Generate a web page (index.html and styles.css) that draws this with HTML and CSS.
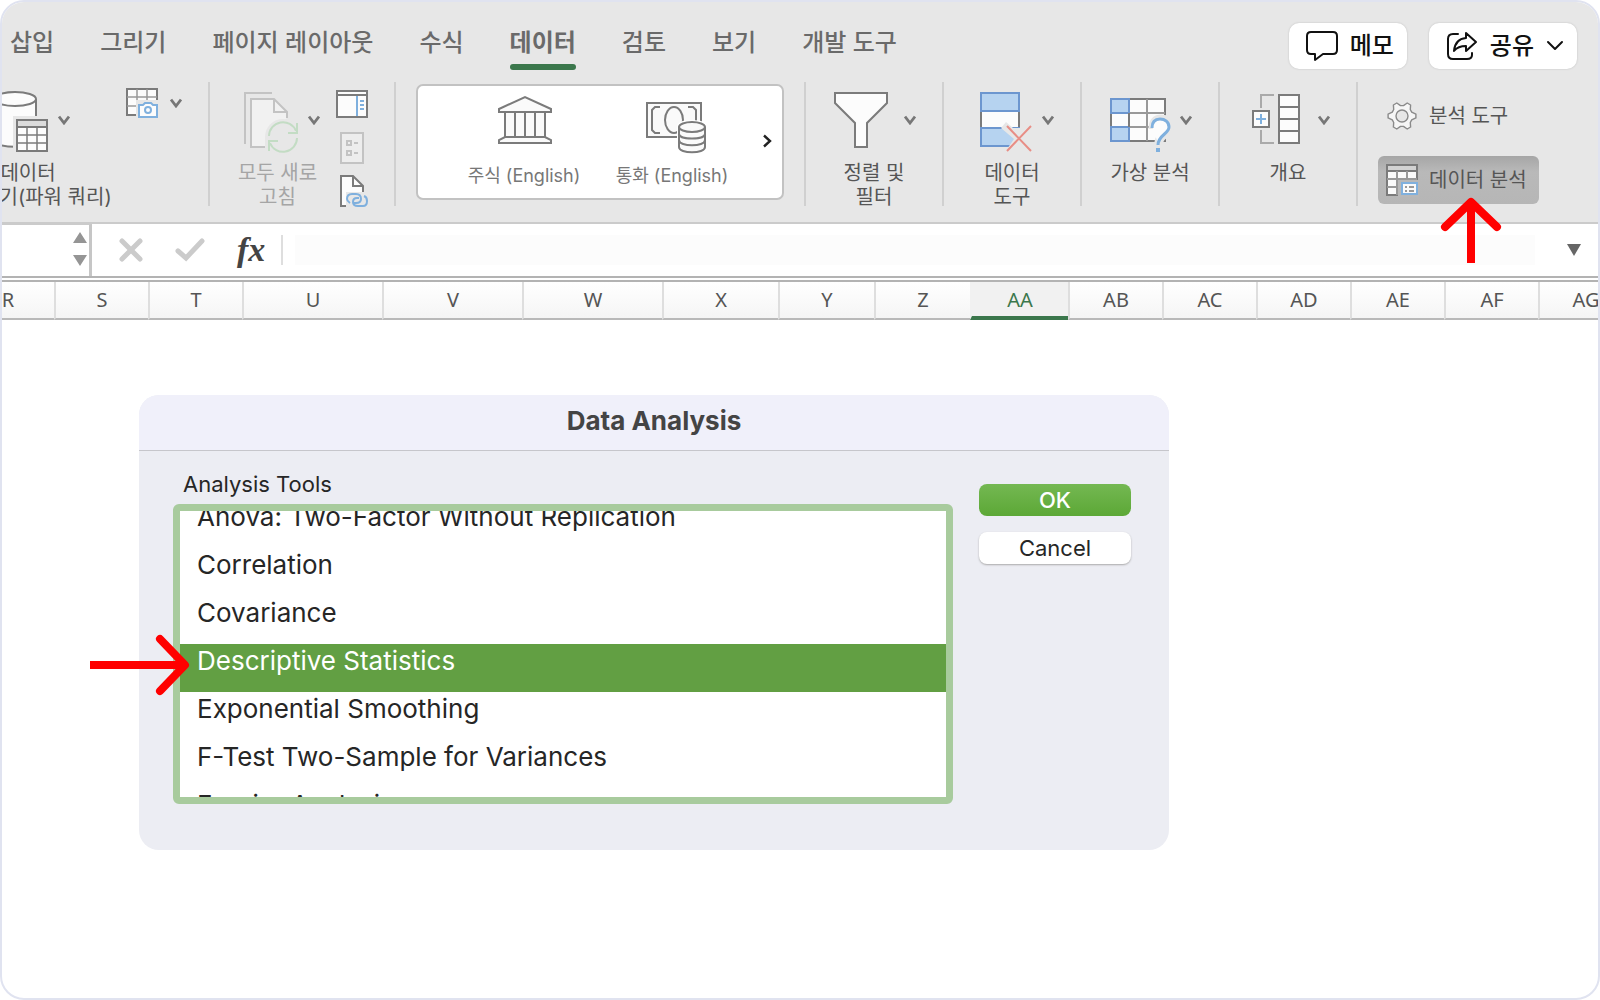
FILE: index.html
```html
<!DOCTYPE html>
<html lang="ko">
<head>
  <meta charset="UTF-8" />
  <meta name="viewport" content="width=device-width, initial-scale=1.0">
  <title>Data Analysis</title>
  <link rel="stylesheet" href="styles.css">
</head>
<body>
  <!-- Shared chevron -->
  <svg class="defs" aria-hidden="true">
    <symbol id="chevron" viewBox="0 0 12 10">
      <path d="M1 1.5L6 8L11 1.5" fill="none" stroke="#777" stroke-width="2.8"/>
    </symbol>
  </svg>

  <div class="window">
    <header class="topbar">
      <nav class="tabs">
        <a href="#" class="tab">삽입</a>
        <a href="#" class="tab">그리기</a>
        <a href="#" class="tab">페이지 레이아웃</a>
        <a href="#" class="tab">수식</a>
        <a href="#" class="tab active">데이터</a>
        <a href="#" class="tab">검토</a>
        <a href="#" class="tab">보기</a>
        <a href="#" class="tab">개발 도구</a>
      </nav>
      <div class="actions">
        <button type="button" class="action">
          <svg width="32" height="32" viewBox="1 0 32 32" fill="none" stroke="#111" stroke-width="2" stroke-linejoin="round"><path d="M6 2H28Q32 2 32 6V20Q32 24 28 24H18L10 30V24H6Q2 24 2 20V6Q2 2 6 2Z"/></svg>
          메모
        </button>
        <button type="button" class="action">
          <svg width="32" height="30" viewBox="0 0 32 30" fill="none" stroke="#111" stroke-width="2" stroke-linejoin="round" stroke-linecap="round"><path d="M12 3H7Q2 3 2 8V23Q2 28 7 28H21Q26 28 26 24V22"/><path d="M20 2L30 11L20 20V15Q12 15 8 20Q9 8 20 7Z"/></svg>
          공유
          <svg width="18" height="12" viewBox="0 0 18 12" fill="none" stroke="#111" stroke-width="2" stroke-linecap="round" stroke-linejoin="round"><path d="M2 2L9 9L16 2"/></svg>
        </button>
      </div>
    </header>

    <section class="ribbon">
      <div class="group group-source">
        <button type="button" class="tool">
          <span class="tool-icon">
            <svg width="64" height="64" viewBox="0 0 64 64" stroke="#7b7b7b" stroke-width="2">
              <path d="M8 11V52C8 61 50 61 50 52V11" fill="#fcfcfc"/>
              <ellipse cx="29" cy="11" rx="21" ry="7" fill="#fcfcfc"/>
              <path d="M27 28H64V64H27Z" fill="#e7e7e7" stroke="none"/>
              <rect x="31" y="32" width="30" height="31" fill="#fcfcfc"/>
              <path d="M31 32H61V39H31Z" fill="#dcdcdc"/>
              <path d="M31 47H61M31 55H61M41 39V63M51 39V63" fill="none" stroke-width="1.5"/>
            </svg>
            <svg class="chevron"><use href="#chevron"/></svg>
          </span>
          <span class="tool-label">데이터<br>가져오기(파워 쿼리)</span>
        </button>
        <button type="button" class="picture-tool" aria-label="그림의 데이터">
          <svg width="34" height="30" viewBox="0 1 34 30" fill="none" stroke="#7b7b7b" stroke-width="2">
            <rect x="2" y="2" width="30" height="26" fill="#fcfcfc"/>
            <path d="M2 10H32M2 19H32M12 2V28M22 2V28" stroke="#999" stroke-width="1.5"/>
            <path d="M11 13H34V32H11Z" fill="#e7e7e7" stroke="none"/>
            <path d="M14 18H18L20 16H26L28 18H32V30H14Z" fill="#fcfcfc" stroke="#7fb0de"/>
            <circle cx="23" cy="23" r="3" stroke="#7fb0de"/>
          </svg>
          <svg class="chevron"><use href="#chevron"/></svg>
        </button>
      </div>

      <div class="group group-refresh">
        <button type="button" class="tool" disabled>
          <span class="tool-icon">
            <svg width="64" height="64" viewBox="0 0 64 64" fill="none" stroke="#c3c3c3" stroke-width="2">
              <path d="M36 5H9V56"/>
              <path d="M29 59H15V11H38L51 24V30L29 48Z" fill="#f1f1f1" stroke="none"/>
              <path d="M29 59H15V11H38L51 24V30M38 11V24H51"/>
              <circle cx="47" cy="49" r="18" fill="#e7e7e7" stroke="none"/>
              <path d="M33 48A14 14 0 0 1 60 43M61 50A14 14 0 0 1 34 55M61 35V45H52M33 63V53H42" stroke="#c3dcc4"/>
            </svg>
            <svg class="chevron"><use href="#chevron"/></svg>
          </span>
          <span class="tool-label">모두 새로<br>고침</span>
        </button>
        <div class="mini-tools">
          <button type="button" aria-label="쿼리 및 연결">
            <svg width="34" height="34" viewBox="0 1 34 34" fill="none" stroke="#7b7b7b" stroke-width="2"><rect x="2" y="4" width="30" height="26" fill="#fcfcfc"/><path d="M2 8H32"/><path d="M22 9V29M25 14H29M25 18H29M25 22H29" stroke="#7fb0de"/></svg>
          </button>
          <button type="button" aria-label="속성" disabled>
            <svg width="34" height="34" viewBox="0 0 34 34" fill="none" stroke="#c3c3c3" stroke-width="2"><rect x="6" y="2" width="22" height="30" fill="#ededed"/><path d="M12 10H16V14H12ZM12 20H16V24H12ZM19 12H23M19 22H23"/></svg>
          </button>
          <button type="button" aria-label="연결 편집">
            <svg width="34" height="34" viewBox="0 0 34 34" fill="none" stroke="#7b7b7b" stroke-width="2"><path d="M14 32H6V2H18L28 12V18L14 24Z" fill="#fcfcfc" stroke="none"/><path d="M14 32H6V2H18L28 12V18M18 2V12H28"/><path d="M11 18H34V34H11Z" fill="#e7e7e7" stroke="none"/><path d="M15 29Q12 27 12 25Q12 20 17 20H21Q26 20 26 25Q26 29 21 29H19M29 22Q32 23 32 27Q32 32 28 32H23Q18 32 18 28Q18 24 22 24H24" stroke="#7fb0de"/></svg>
          </button>
        </div>
      </div>

      <div class="group group-types">
        <div class="gallery">
          <button type="button" class="gallery-item">
            <svg width="64" height="64" viewBox="0 0 64 64" fill="#fafafa" stroke="#7b7b7b" stroke-width="2"><path d="M7 18V15L33 3L59 15V18Z"/><path d="M13 18H53V43H13ZM23 18V43M33 18V43M43 18V43"/><path d="M13 43H53L59 46V49H7V46Z"/></svg>
            주식 (English)
          </button>
          <button type="button" class="gallery-item">
            <svg width="64" height="64" viewBox="0 0 64 64" fill="none" stroke="#7b7b7b" stroke-width="2"><rect x="7" y="9" width="54" height="34" fill="#fafafa"/><path d="M20 13H15L12 16V36L15 39H20M48 13H53L56 16V28"/><ellipse cx="34" cy="26" rx="9" ry="13"/><path d="M37 33Q37 26 52 26T66 33V60H37Z" fill="#fff" stroke="none"/><path d="M39 33V53C39 60 65 60 65 53V33" fill="#fafafa"/><ellipse cx="52" cy="33" rx="13" ry="5" fill="#fafafa"/><path d="M39 40C39 46 65 46 65 40M39 46C39 53 65 53 65 46"/></svg>
            통화 (English)
          </button>
          <button type="button" class="gallery-more" aria-label="더 보기">
            <svg width="10" height="14" viewBox="0 0 10 14" fill="none" stroke="#222" stroke-width="2.4"><path d="M2 1.5L8 7L2 12.5"/></svg>
          </button>
        </div>
      </div>

      <div class="group">
        <button type="button" class="tool">
          <span class="tool-icon">
            <svg width="64" height="64" viewBox="0 0 64 64" fill="#fcfcfc" stroke="#7b7b7b" stroke-width="2"><path d="M3 5H55V15L35 35V59H23V35L3 15Z"/></svg>
            <svg class="chevron"><use href="#chevron"/></svg>
          </span>
          <span class="tool-label">정렬 및<br>필터</span>
        </button>
      </div>

      <div class="group">
        <button type="button" class="tool">
          <span class="tool-icon">
            <svg width="64" height="64" viewBox="0 0 64 64" fill="none" stroke-width="2"><path d="M11 23H49V40H11Z" fill="#fcfcfc" stroke="#7b7b7b"/><path d="M11 5H49V23H11ZM11 40H49V58H11Z" fill="#b6d3f0" stroke="#6c96cf"/><path d="M31 40L36 34L43 40H64V64H35L44 51Z" fill="#e7e7e7"/><path d="M37 38L61 63M61 38L37 63" stroke="#e88e86"/></svg>
            <svg class="chevron"><use href="#chevron"/></svg>
          </span>
          <span class="tool-label">데이터<br>도구</span>
        </button>
      </div>

      <div class="group">
        <button type="button" class="tool">
          <span class="tool-icon">
            <svg width="64" height="64" viewBox="0 0 64 64" fill="none" stroke-width="2"><rect x="3" y="11" width="54" height="42" fill="#fcfcfc" stroke="#7b7b7b"/><path d="M21 25H57M21 39H57M39 11V53" stroke="#999"/><path d="M3 11H21V25H3ZM3 39H21V53H3Z" fill="#b6d3f0" stroke="#6c96cf"/><path d="M21 25V39" stroke="#7b7b7b"/><path d="M45 41C45 34 48 31 53 31S61 34 61 39C61 46 51 47 51 54V62" stroke="#e7e7e7" stroke-width="9"/><path d="M45 41C43 34 47 32 52 32S60 35 60 40C60 47 51 47 51 58" fill="#fcfcfc" stroke="none"/><path d="M44 40C44 34 47 31 52 31S61 34 61 39C61 46 50 47 50 57" stroke="#7fb0de" stroke-width="3"/><path d="M48 60H52V64H48Z" fill="#7fb0de"/></svg>
            <svg class="chevron"><use href="#chevron"/></svg>
          </span>
          <span class="tool-label">가상 분석</span>
        </button>
      </div>

      <div class="group">
        <button type="button" class="tool">
          <span class="tool-icon">
            <svg width="64" height="64" viewBox="0 0 64 64" fill="none" stroke="#7b7b7b" stroke-width="2"><path d="M28 7H15V20M15 42V55H28" stroke="#aaa"/><rect x="33" y="7" width="20" height="48" fill="#fcfcfc"/><path d="M33 19H53M33 31H53M33 43H53"/><rect x="7" y="23" width="16" height="16" fill="#fcfcfc"/><path d="M15 26V36M10 31H20" stroke="#7fb0de"/></svg>
            <svg class="chevron"><use href="#chevron"/></svg>
          </span>
          <span class="tool-label">개요</span>
        </button>
      </div>

      <div class="group group-analysis">
        <button type="button" class="analysis-button">
          <svg width="34" height="34" viewBox="0 0 34 34" fill="#f6f6f6" stroke="#8a8a8a" stroke-width="1.4" stroke-linejoin="round"><path d="M30.900 15.100V18.900L26.700 20.900L25.300 23.500L25.600 28L22.200 30L18.500 27.400H15.500L11.800 30L8.400 28L8.700 23.500L7.300 20.900L3.100 18.900V15.100L7.300 13.100L8.700 10.500L8.400 6L11.800 4L15.500 6.600H18.500L22.200 4L25.600 6L25.300 10.500L26.700 13.100Z"/><circle cx="17" cy="17" r="6" fill="#e7e7e7"/></svg>
          분석 도구
        </button>
        <button type="button" class="analysis-button pressed">
          <svg width="34" height="34" viewBox="0 0 34 34" fill="none" stroke="#7b7b7b" stroke-width="2"><rect x="2" y="2" width="30" height="30" fill="#fafafa"/><path d="M2 2H32V8H2Z" fill="#d2d2d2"/><path d="M2 16H32M2 24H12M12 8V32M22 8V16" stroke="#999"/><path d="M13 17H34V34H13Z" fill="#b8b8b8" stroke="none"/><path d="M17 20H32V31H17Z" fill="#fafafa" stroke="#7fb0de"/><path d="M20 24H22M24 24H29M20 28H22M24 28H29" stroke="#999"/></svg>
          데이터 분석
          <svg class="arrow-up" width="64" height="70" viewBox="0 0 64 70" fill="none" stroke="#f00" stroke-width="8"><path d="M32 8V67"/><path d="M6 31L32 6L58 31" stroke-linecap="round" stroke-linejoin="round"/></svg>
        </button>
      </div>
    </section>

    <section class="formula-bar">
      <div class="name-box">
        <svg width="14" height="34" viewBox="0 0 14 34" fill="#959595"><path d="M7 0L14 11H0ZM7 34L0 23H14Z"/></svg>
      </div>
      <button type="button" aria-label="취소"><svg width="24" height="24" viewBox="0 0 24 24" fill="none" stroke="#cbcbcb" stroke-width="5" stroke-linecap="round"><path d="M3 3L21 21M21 3L3 21"/></svg></button>
      <button type="button" aria-label="입력"><svg width="30" height="24" viewBox="0 0 30 24" fill="none" stroke="#cbcbcb" stroke-width="5" stroke-linecap="round"><path d="M3 13L11 20L27 3"/></svg></button>
      <button type="button" class="fx">fx</button>
      <input type="text" class="formula-input" aria-label="수식 입력줄">
      <button type="button" class="expand" aria-label="확장"><svg width="14" height="12" viewBox="0 0 14 12" fill="#666"><path d="M0 0H14L7 12Z"/></svg></button>
    </section>

    <div class="columns">
      <table>
        <colgroup>
          <col class="c94"><col class="c94"><col class="c94"><col class="c140"><col class="c140"><col class="c140"><col class="c116"><col class="c96"><col class="c96"><col class="c98"><col class="c94"><col class="c94"><col class="c94"><col class="c94"><col class="c94"><col class="c94">
        </colgroup>
        <thead>
          <tr>
            <th>R</th><th>S</th><th>T</th><th>U</th><th>V</th><th>W</th><th>X</th><th>Y</th><th>Z</th><th class="selected">AA</th><th>AB</th><th>AC</th><th>AD</th><th>AE</th><th>AF</th><th>AG</th>
          </tr>
        </thead>
      </table>
    </div>

    <main class="sheet">
      <div class="dialog" role="dialog" aria-labelledby="dialog-title">
        <h1 id="dialog-title">Data Analysis</h1>
        <form class="dialog-body">
          <div class="field">
            <label for="tools">Analysis Tools</label>
            <select id="tools" size="6">
              <option>Anova: Two-Factor Without Replication</option>
              <option>Correlation</option>
              <option>Covariance</option>
              <option selected>Descriptive Statistics</option>
              <option>Exponential Smoothing</option>
              <option>F-Test Two-Sample for Variances</option>
              <option>Fourier Analysis</option>
            </select>
            <svg class="arrow-right" width="102" height="64" viewBox="0 0 102 64" fill="none" stroke="#f00" stroke-width="8"><path d="M0 32H94"/><path d="M70 6L95 32L70 58" stroke-linecap="round" stroke-linejoin="round"/></svg>
          </div>
          <div class="dialog-buttons">
            <button type="submit" class="ok">OK</button>
            <button type="button" class="cancel">Cancel</button>
          </div>
        </form>
      </div>
    </main>
  </div>

  <script>
    // The list opens slightly scrolled
    window.addEventListener("load", () => {
      document.getElementById("tools").scrollTop = 11;
    });
  </script>
</body>
</html>
```
FILE: styles.css
```css
* {
  box-sizing: border-box;
}

body {
  margin: 0;
  background-color: #fff;
  color: #555;
  font-family: Inter, "Noto Sans CJK KR", sans-serif;
}

button {
  margin: 0;
  padding: 0;
  border: 0;
  background: none;
  color: inherit;
  font: inherit;
}

svg {
  display: block;
  flex: none;
  overflow: visible;
}

.defs {
  position: absolute;
  width: 0;
  height: 0;
}

.window {
  min-height: 100vh;
  border: 2px solid #e0e3f0;
  border-radius: 24px;
  overflow: hidden;
}

/* Tabs */
.topbar {
  display: flex;
  justify-content: space-between;
  align-items: flex-start;
  height: 80px;
  padding: 21px 21px 0 8px;
  background-color: #e7e7e7;
}

.tabs {
  display: flex;
  gap: 46px;
  padding-top: 2px;
}

.tab {
  color: #6a6a6a;
  font-size: 24px;
  font-weight: 500;
  line-height: 36px;
  text-decoration: none;
  white-space: nowrap;
}

.tab.active {
  font-weight: 700;
}

.tab.active::after {
  content: "";
  display: block;
  height: 6px;
  margin-top: 3px;
  border-radius: 3px;
  background-color: #3b774c;
}

.actions {
  display: flex;
  gap: 22px;
}

.action {
  display: flex;
  align-items: center;
  gap: 12px;
  height: 46px;
  padding: 0 13px 0 17px;
  border-radius: 10px;
  background-color: #fff;
  box-shadow: 0 0 2px #bbb;
  color: #111;
  font-size: 24px;
  font-weight: 500;
  line-height: 36px;
  white-space: nowrap;
}

/* Ribbon */
.ribbon {
  display: grid;
  grid-template-columns: 208fr 186fr 410fr repeat(4, 138fr) 240fr;
  padding-bottom: 16px;
  border-bottom: 2px solid #cbcbcb;
  background-color: #e7e7e7;
}

.group {
  display: flex;
  align-items: flex-start;
  justify-content: center;
  height: 124px;
  padding-top: 6px;
  border-right: 2px solid #d0d0d0;
}

.group:last-child {
  border-right: 0;
}

.tool {
  display: flex;
  flex-direction: column;
  align-items: center;
  gap: 9px;
  width: 84px;
}

.tool:disabled {
  color: #a5a5a5;
}

.tool-icon {
  display: flex;
  align-items: center;
  gap: 8px;
}

.chevron {
  width: 12px;
  height: 10px;
}

.tool-label {
  font-size: 20px;
  line-height: 24px;
  text-align: center;
  white-space: nowrap;
}

.group-source {
  justify-content: flex-start;
  gap: 55px;
  margin-left: -16px;
}

.picture-tool {
  display: flex;
  align-items: center;
  gap: 11px;
}

.group-refresh {
  gap: 15px;
}

.mini-tools {
  display: flex;
  flex-direction: column;
  gap: 9px;
}

.group-types {
  padding: 2px 20px 0;
}

.gallery {
  display: flex;
  flex: 1;
  height: 116px;
  padding: 8px 0 0 32px;
  border: 2px solid #c2c2c2;
  border-radius: 7px;
  background-color: #fff;
}

.gallery-item {
  display: flex;
  flex-direction: column;
  align-items: center;
  width: 148px;
  color: #777;
  font-size: 18px;
  line-height: 36px;
  white-space: nowrap;
}

.gallery-more {
  display: flex;
  flex: 1;
  align-items: center;
  justify-content: center;
  padding: 0 0 10px 6px;
}

.group-analysis {
  flex-direction: column;
  justify-content: flex-start;
  gap: 16px;
  padding: 10px 0 0 20px;
}

.analysis-button {
  position: relative;
  display: flex;
  align-items: center;
  gap: 10px;
  height: 48px;
  padding: 0 12px 0 7px;
  border-radius: 6px;
  font-size: 20px;
  line-height: 24px;
  white-space: nowrap;
}

.analysis-button.pressed {
  background: linear-gradient(#a6a6a6, #b9b9b9 16px, #b6b6b6);
}

/* Red pointers over the controls */
.arrow-up {
  position: absolute;
  top: 40px;
  left: 61px;
  z-index: 1;
}

.arrow-right {
  position: absolute;
  top: 161px;
  left: -83px;
}

/* Formula bar */
.formula-bar {
  display: flex;
  align-items: center;
  height: 52px;
  padding-right: 17px;
}

.formula-bar button {
  margin-left: 32px;
}

.name-box {
  display: flex;
  align-items: center;
  justify-content: flex-end;
  width: 90px;
  height: 52px;
  margin-right: -5px;
  padding: 0 2px 4px 0;
  border-top: 1px solid #cbcbcb;
  border-right: 3px solid #c6c6c6;
}

.formula-bar .fx {
  color: #444;
  font-family: "Liberation Serif", serif;
  font-size: 34px;
  font-style: italic;
  font-weight: 700;
  line-height: 36px;
}

.formula-input {
  flex: 1;
  min-width: 0;
  height: 30px;
  margin-left: 16px;
  padding: 0 16px;
  border: 0;
  border-left: 2px solid #dedede;
  background: linear-gradient(90deg, #fff 12px, #fcfcfc 12px);
  font: inherit;
}

/* Column headers */
.columns {
  overflow: hidden;
  border-top: 6px double #b3b3b3;
}

.columns table {
  width: 1672px;
  margin-left: -42px;
  border-spacing: 0;
  table-layout: fixed;
}

.c94 { width: 94px; }
.c96 { width: 96px; }
.c98 { width: 98px; }
.c116 { width: 116px; }
.c140 { width: 140px; }

.columns th {
  height: 38px;
  padding: 0;
  border-left: 2px solid #dedede;
  border-bottom: 2px solid #b9b9b9;
  background: linear-gradient(#fff, #f5f5f5);
  font-family: "Noto Sans", sans-serif;
  font-size: 20px;
  font-weight: 400;
  line-height: 24px;
}

.columns th.selected {
  padding-top: 2px;
  border-left-color: #f1f1f1;
  border-bottom: 4px solid #3b774c;
  background: #f1f1f1;
  color: #3b774c;
}

/* Data Analysis dialog */
.sheet {
  padding: 75px 137px;
}

.dialog {
  max-width: 1030px;
  border-radius: 20px;
  background-color: #ecedf3;
  color: #262626;
}

.dialog h1 {
  margin: 0;
  padding: 8px 0 11px;
  border-bottom: 1px solid #c6c6cb;
  border-radius: 20px 20px 0 0;
  background-color: #f0f0fa;
  color: #444;
  font-size: 26px;
  font-weight: 700;
  line-height: 36px;
  text-align: center;
}

.dialog-body {
  display: grid;
  grid-template-columns: 1fr 152px;
  gap: 26px;
  padding: 21px 38px 46px 34px;
}

.field {
  position: relative;
}

.field label {
  display: block;
  padding-left: 10px;
  font-size: 22px;
  line-height: 24px;
}

.field select {
  display: block;
  width: 100%;
  height: 300px;
  margin-top: 8px;
  padding: 0;
  border: 7px solid #a8cb9d;
  border-radius: 6px;
  outline: 0;
  background-color: #fff;
  color: #262626;
  font-family: inherit;
  font-size: 26px;
  scrollbar-width: none;
}

.field option {
  height: 48px;
  min-height: 48px;
  padding: 1px 17px 13px;
  line-height: 34px;
}

.field option:checked {
  background: #629f43 linear-gradient(#629f43, #629f43);
  color: #fff;
}

.dialog-buttons {
  display: flex;
  flex-direction: column;
  gap: 16px;
  padding-top: 12px;
}

.dialog-buttons button {
  height: 32px;
  border-radius: 8px;
  background-color: #fff;
  box-shadow: 0 1px 2px #aaa;
  font-size: 22px;
  line-height: 32px;
}

.dialog-buttons .ok {
  background: linear-gradient(#74b852, #5ca836);
  box-shadow: none;
  color: #fff;
  font-weight: 500;
}
```
